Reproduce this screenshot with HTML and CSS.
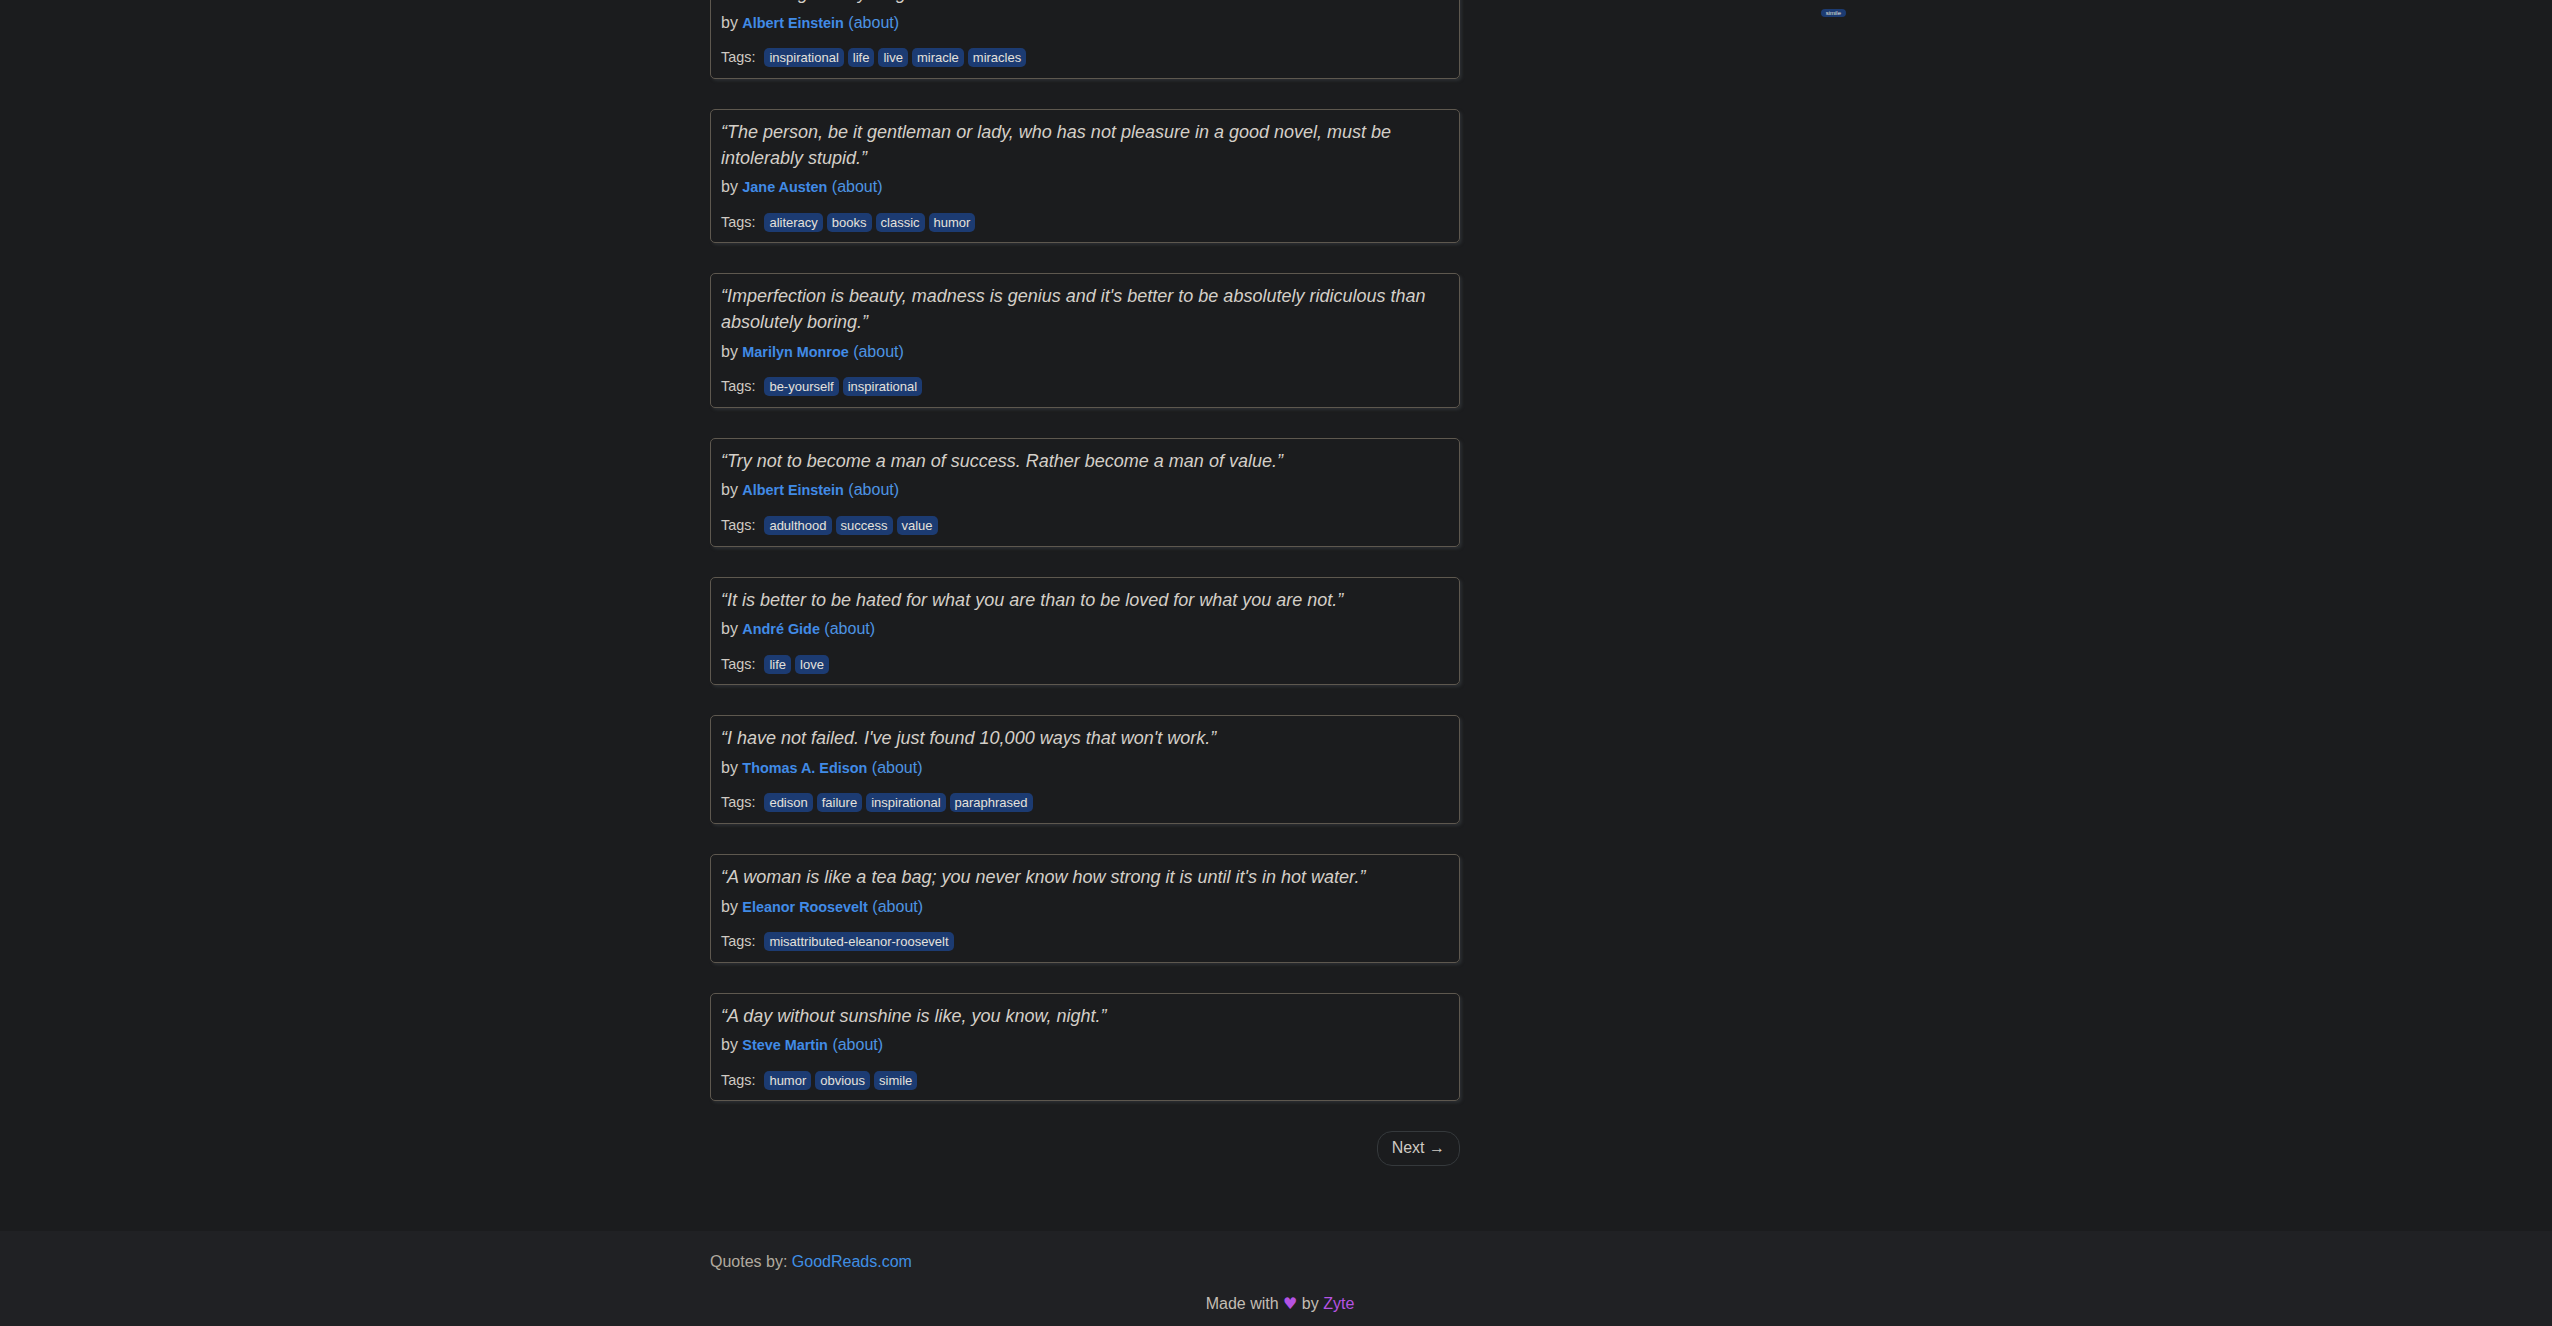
FILE: index.html
```html
<!DOCTYPE html>
<html lang="en">
<head>
<meta charset="utf-8">
<title>Quotes to Scrape</title>
<link rel="stylesheet" href="styles.css">
</head>
<body>
<div class="container">
  <div class="row">
    <div class="main">
      <div class="quote">
        <span class="text">“There are only two ways to live your life. One is as though nothing is a miracle. The other is as though everything is a miracle.”</span>
        <span class="byline">by <small class="author">Albert Einstein</small> <a href="#">(about)</a></span>
        <div class="tags"><span class="tags-label">Tags:</span> <a class="tag" href="#">inspirational</a> <a class="tag" href="#">life</a> <a class="tag" href="#">live</a> <a class="tag" href="#">miracle</a> <a class="tag" href="#">miracles</a></div>
      </div>
      <div class="quote">
        <span class="text">“The person, be it gentleman or lady, who has not pleasure in a good novel, must be intolerably stupid.”</span>
        <span class="byline">by <small class="author">Jane Austen</small> <a href="#">(about)</a></span>
        <div class="tags"><span class="tags-label">Tags:</span> <a class="tag" href="#">aliteracy</a> <a class="tag" href="#">books</a> <a class="tag" href="#">classic</a> <a class="tag" href="#">humor</a></div>
      </div>
      <div class="quote">
        <span class="text">“Imperfection is beauty, madness is genius and it's better to be absolutely ridiculous than absolutely boring.”</span>
        <span class="byline">by <small class="author">Marilyn Monroe</small> <a href="#">(about)</a></span>
        <div class="tags"><span class="tags-label">Tags:</span> <a class="tag" href="#">be-yourself</a> <a class="tag" href="#">inspirational</a></div>
      </div>
      <div class="quote">
        <span class="text">“Try not to become a man of success. Rather become a man of value.”</span>
        <span class="byline">by <small class="author">Albert Einstein</small> <a href="#">(about)</a></span>
        <div class="tags"><span class="tags-label">Tags:</span> <a class="tag" href="#">adulthood</a> <a class="tag" href="#">success</a> <a class="tag" href="#">value</a></div>
      </div>
      <div class="quote">
        <span class="text">“It is better to be hated for what you are than to be loved for what you are not.”</span>
        <span class="byline">by <small class="author">André Gide</small> <a href="#">(about)</a></span>
        <div class="tags"><span class="tags-label">Tags:</span> <a class="tag" href="#">life</a> <a class="tag" href="#">love</a></div>
      </div>
      <div class="quote">
        <span class="text">“I have not failed. I've just found 10,000 ways that won't work.”</span>
        <span class="byline">by <small class="author">Thomas A. Edison</small> <a href="#">(about)</a></span>
        <div class="tags"><span class="tags-label">Tags:</span> <a class="tag" href="#">edison</a> <a class="tag" href="#">failure</a> <a class="tag" href="#">inspirational</a> <a class="tag" href="#">paraphrased</a></div>
      </div>
      <div class="quote">
        <span class="text">“A woman is like a tea bag; you never know how strong it is until it's in hot water.”</span>
        <span class="byline">by <small class="author">Eleanor Roosevelt</small> <a href="#">(about)</a></span>
        <div class="tags"><span class="tags-label">Tags:</span> <a class="tag" href="#">misattributed-eleanor-roosevelt</a></div>
      </div>
      <div class="quote">
        <span class="text">“A day without sunshine is like, you know, night.”</span>
        <span class="byline">by <small class="author">Steve Martin</small> <a href="#">(about)</a></span>
        <div class="tags"><span class="tags-label">Tags:</span> <a class="tag" href="#">humor</a> <a class="tag" href="#">obvious</a> <a class="tag" href="#">simile</a></div>
      </div>
      <nav>
        <ul class="pager">
          <li class="next"><a href="#">Next <span class="arrow">→</span></a></li>
        </ul>
      </nav>
    </div>
    <div class="side">
      <span class="tag-item"><a class="tag tag-tiny" href="#">simile</a></span>
    </div>
  </div>
</div>
<footer class="footer">
  <div class="container">
    <p class="credit">Quotes by: <a href="#">GoodReads.com</a></p>
    <p class="copyright">Made with <span class="zyte heart">♥</span> by <a class="zyte" href="#">Zyte</a></p>
  </div>
</footer>
</body>
</html>
```

FILE: styles.css
```css
html {
  background: #0e0f10;
}

body {
  margin: 0;
  background: #1b1c1e;
  color: #cfcac3;
  font-family: "Liberation Sans", Arial, Helvetica, sans-serif;
  font-size: 16px;
  line-height: 1.42857;
}

a {
  text-decoration: none;
}

.container {
  width: 1140px;
  padding: 0 15px;
  margin-left: calc(50% - 581px);
}

.row {
  display: grid;
  grid-template-columns: 750px 360px;
  column-gap: 30px;
  margin-top: -55.6px;
}

.quote {
  border: 1px solid #5e584f;
  border-radius: 5px;
  padding: 10px;
  margin-bottom: 30px;
  box-shadow: 2px 2px 3px #2b2e31;
}

.text {
  display: block;
  font-size: 18px;
  font-style: italic;
  line-height: 25.714px;
  margin-bottom: 5px;
  color: #d4cfc8;
}

.byline {
  display: block;
  line-height: 22.857px;
}

.author {
  font-size: 14.4px;
  font-weight: bold;
  color: #418be6;
}

.byline a {
  color: #4d94e3;
}

.tags {
  font-size: 14.4px;
  line-height: 20.57px;
  margin-top: 12.6px;
}

.tags-label {
  margin-right: 5px;
}

.tag {
  font-size: 13px;
  line-height: 1.3;
  padding: 2px 5px;
  border-radius: 5px;
  background: #1c3b72;
  color: #e4e1dc;
}

.pager {
  margin: 0;
  padding: 0;
  list-style: none;
  text-align: right;
}

.pager a {
  display: inline-block;
  padding: 5px 14px;
  border: 1px solid #35393c;
  border-radius: 15px;
  background: #1b1c1e;
  color: #cfcac3;
}

.arrow {
  display: inline-block;
  width: 16px;
  text-align: center;
}

.side {
  padding-top: 64.6px;
}

.tag-item {
  display: flex;
  justify-content: flex-end;
  margin-right: 4px;
}

.tag-tiny {
  display: inline-block;
  font-size: 6px;
  line-height: 6px;
  padding: 1px 5px;
  border-radius: 4px;
}

.footer {
  margin-top: 64.3px;
  padding: 20px 0 10px;
  background: #202124;
}

.footer p {
  margin: 0 0 20px;
}

.credit {
  color: #b1aa9f;
}

.credit a {
  color: #3f8fe4;
}

.footer .copyright {
  margin: 0;
  text-align: center;
  color: #c3bdb4;
}

.zyte {
  color: #b553e3;
}

.heart {
  font-family: "DejaVu Sans", sans-serif;
}
```
